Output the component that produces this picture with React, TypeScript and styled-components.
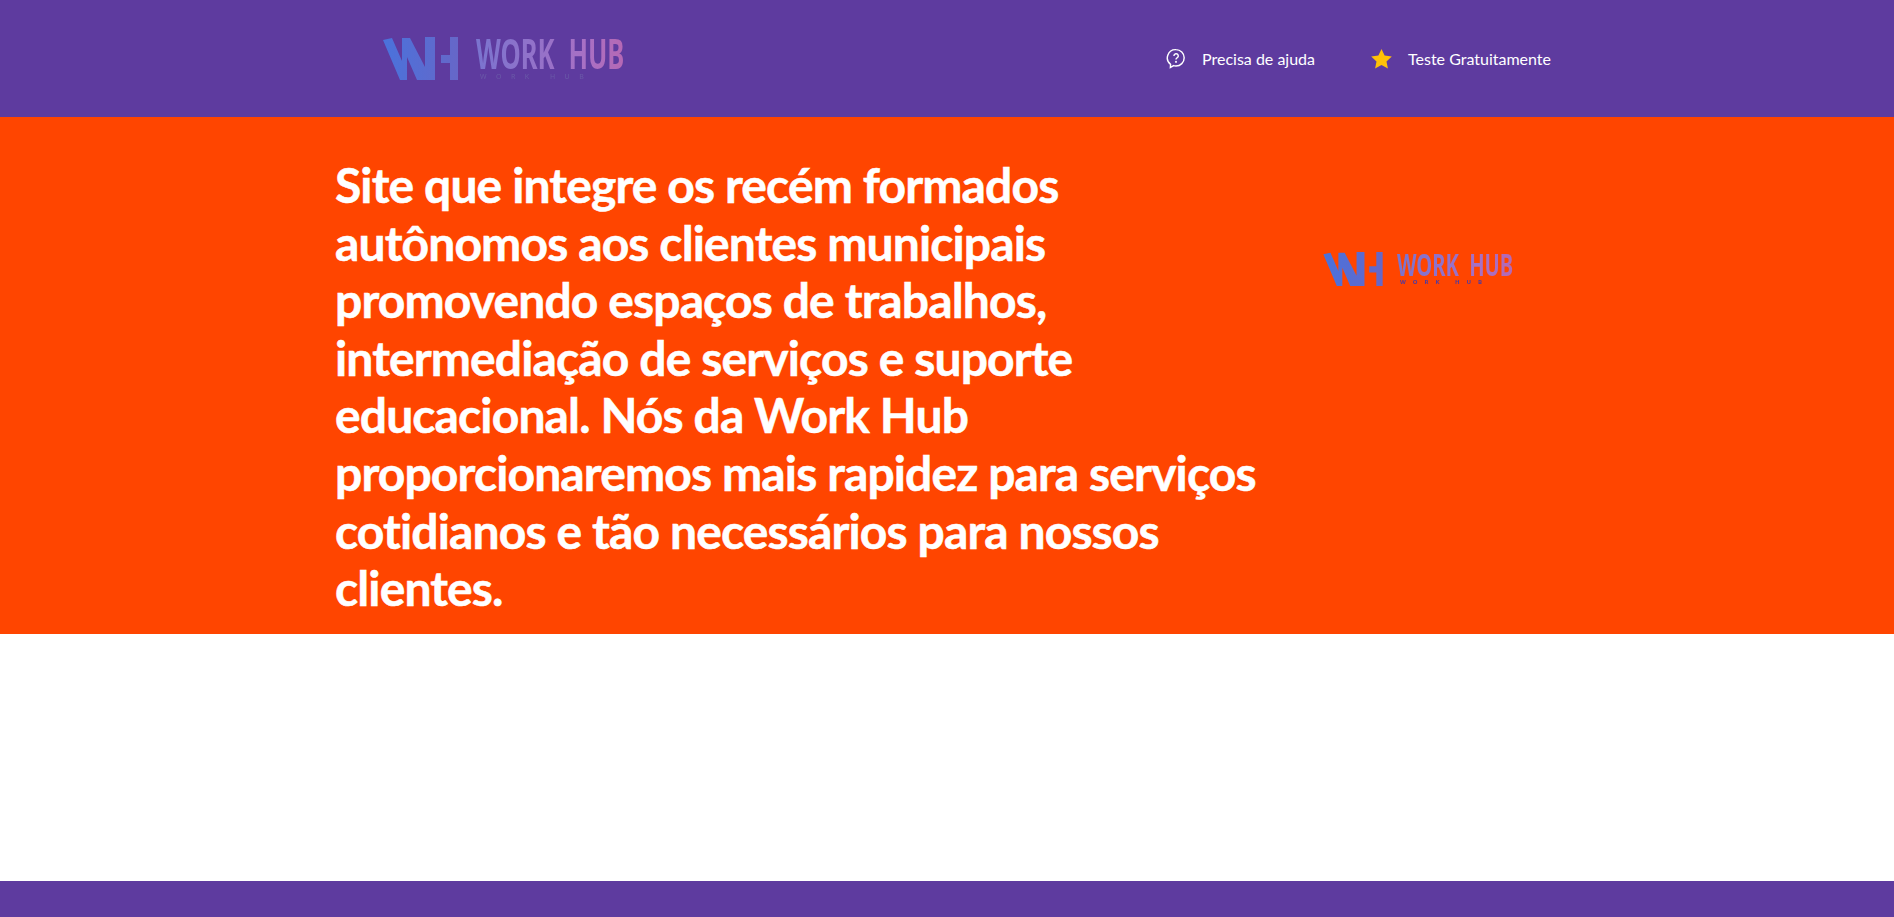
import React from "react";
import styled, { createGlobalStyle } from "styled-components";

const Global = createGlobalStyle`
  html, body { margin: 0; padding: 0; background: #fff; }
  body { font-family: "Lato", "Liberation Sans", sans-serif; }
`;

const Page = styled.div`
  display: flex;
  flex-direction: column;
  height: 917px;
  overflow: hidden;
`;

const Header = styled.header`
  height: 117px;
  flex: none;
  background: #5e3b9f;
  display: flex;
  align-items: center;
  justify-content: space-between;
  padding: 0 343px 0 383px;
  box-sizing: border-box;
`;

const Nav = styled.nav`
  display: flex;
  align-items: center;
  gap: 56px;
`;

const NavItem = styled.a`
  display: flex;
  align-items: center;
  gap: 16px;
  color: #fff;
  font-size: 16px;
  line-height: 20px;
`;

const Hero = styled.section`
  height: 517px;
  flex: none;
  background: #ff4500;
  display: flex;
  padding-left: 335px;
  box-sizing: border-box;
`;

const Headline = styled.h1`
  width: 960px;
  flex: none;
  margin: 39px 0 0;
  color: #fff;
  font-family: "Lato", "Noto Sans", sans-serif;
  font-size: 48px;
  line-height: 57.6px;
  font-weight: 700;
  letter-spacing: -0.87px;
  -webkit-text-stroke: 0.5px #fff;
`;

const HeroLogo = styled.div`
  margin: 135px 0 0 28px;
`;

const Spacer = styled.div`
  flex: 1;
`;

const Footer = styled.footer`
  height: 36px;
  flex: none;
  background: #5e3b9f;
`;

const LogoWrap = styled.div<{ $w: number; $h: number }>`
  display: flex;
  align-items: flex-start;
  width: ${(p) => p.$w}px;
  height: ${(p) => p.$h}px;
  filter: blur(0.5px);
`;

const Mark = styled.svg<{ $w: number; $h: number; $gap: number }>`
  width: ${(p) => p.$w}px;
  height: ${(p) => p.$h}px;
  margin-right: ${(p) => p.$gap}px;
  flex: none;
`;

const LogoText = styled.div<{ $mt: number }>`
  display: flex;
  flex-direction: column;
  margin-top: ${(p) => p.$mt}px;
  font-family: "Noto Sans", sans-serif;
`;

const LogoTitle = styled.span<{ $size: number; $sx: number; $sy: number; $h: number; $ws: number }>`
  display: block;
  height: ${(p) => p.$h}px;
  font-size: ${(p) => p.$size}px;
  line-height: ${(p) => p.$h}px;
  font-weight: 700;
  word-spacing: ${(p) => p.$ws}px;
  white-space: pre;
  transform: scale(${(p) => p.$sx}, ${(p) => p.$sy});
  transform-origin: left center;
  background: linear-gradient(90deg, #7a74cf, #a970c4 75%, #b568b4);
  -webkit-background-clip: text;
  background-clip: text;
  color: transparent;
`;

const LogoSub = styled.span<{ $size: number; $sp: number; $c: string; $ml: number; $mt: number; $w: number }>`
  display: block;
  margin: ${(p) => p.$mt}px 0 0 ${(p) => p.$ml}px;
  font-size: ${(p) => p.$size}px;
  font-weight: ${(p) => p.$w};
  line-height: 1;
  letter-spacing: ${(p) => p.$sp}px;
  color: ${(p) => p.$c};
  white-space: pre;
`;

function WH({ w, h, gap, id }: { w: number; h: number; gap: number; id: string }) {
  return (
    <Mark $w={w} $h={h} $gap={gap} viewBox="0 0 75 43">
      <defs>
        <linearGradient id={id} x1="0" x2="1" y1="0" y2="0">
          <stop offset="0" stopColor="#4a72dc" />
          <stop offset="1" stopColor="#6667c8" />
        </linearGradient>
      </defs>
      <path
        fill={`url(#${id})`}
        d="M0 3 L9 1 L19 24 V1 H27 L42 30 V0 H52 V43 H34 L24 20 V43 H17 Z M58 18 H67 V0 H75 V43 H67 V26 H58 Z"
      />
    </Mark>
  );
}

export default function App() {
  return (
    <Page>
      <Global />
      <Header>
        <LogoWrap $w={240} $h={44}>
          <WH w={75} h={43} gap={18} id="a" />
          <LogoText $mt={3}>
            <LogoTitle $size={32} $sx={0.8} $sy={1.3} $h={26} $ws={9}>WORK HUB</LogoTitle>
            <LogoSub $size={7} $sp={9.5} $c="#6a5aa8" $ml={4} $mt={7} $w={400}>WORK HUB</LogoSub>
          </LogoText>
        </LogoWrap>
        <Nav>
          <NavItem>
            <svg width="20" height="21" viewBox="0 0 21 21" fill="none" stroke="#fff" strokeWidth="1.5">
              <path d="M10.5 1.2a8.6 8.6 0 0 1 0 17.2c-.9 0-1.7-.1-2.5-.4L4.6 20l.2-3.4A8.6 8.6 0 0 1 10.5 1.2z" />
              <path d="M8.3 7.8a2.3 2.3 0 1 1 3.3 2.1c-.8.4-1.1.8-1.1 1.6" />
              <circle cx="10.5" cy="14" r=".4" />
            </svg>
            Precisa de ajuda
          </NavItem>
          <NavItem>
            <svg width="21" height="20" viewBox="0 0 21 20">
              <path fill="#ffc107" d="M10.5 0l3.1 6.6 7.2.9-5.3 4.9 1.4 7.1-6.4-3.5-6.4 3.5 1.4-7.1L.2 7.5l7.2-.9z" />
            </svg>
            Teste Gratuitamente
          </NavItem>
        </Nav>
      </Header>
      <Hero>
        <Headline>
          Site que integre os recém formados autônomos aos clientes municipais promovendo espaços de trabalhos,
          intermediação de serviços e suporte educacional. Nós da Work Hub proporcionaremos mais rapidez para serviços
          cotidianos e tão necessários para nossos clientes.
        </Headline>
        <HeroLogo>
          <LogoWrap $w={190} $h={35}>
            <WH w={60} h={34} gap={14} id="b" />
            <LogoText $mt={2}>
              <LogoTitle $size={24} $sx={0.84} $sy={1.3} $h={20} $ws={6}>WORK HUB</LogoTitle>
              <LogoSub $size={6} $sp={7} $c="#4f3aa0" $ml={3} $mt={5} $w={700}>WORK HUB</LogoSub>
            </LogoText>
          </LogoWrap>
        </HeroLogo>
      </Hero>
      <Spacer />
      <Footer />
    </Page>
  );
}
